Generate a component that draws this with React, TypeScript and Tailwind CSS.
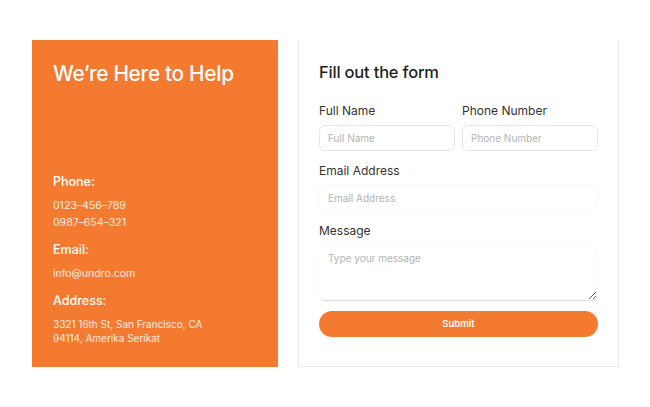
import React from 'react';

const font = { fontFamily: 'Inter, "Noto Sans", sans-serif' };

const ContactInfo = () => (
  <div className="w-[246px] h-[327px] bg-[#F47A30] text-white px-[21px] pt-[21px]">
    <h1 className="text-[20.8px] font-medium leading-[26px] tracking-[-0.3px]">We’re Here to Help</h1>
    <div className="mt-[87px]">
      <h3 className="text-[12.5px] font-medium leading-4">Phone:</h3>
      <p className="mt-[7px] text-[10.5px] leading-[17px] text-white/85">0123–456–789</p>
      <p className="text-[10.5px] leading-[17px] text-white/85">0987–654–321</p>
      <h3 className="mt-[11px] text-[12.5px] font-medium leading-4">Email:</h3>
      <p className="mt-[7px] text-[10.5px] leading-[17px] text-white/85">info@undro.com</p>
      <h3 className="mt-[11px] text-[12.5px] font-medium leading-4">Address:</h3>
      <p className="mt-[8px] text-[10px] leading-[14px] text-white/85">
        3321 16th St, San Francisco, CA
        <br />
        94114, Amerika Serikat
      </p>
    </div>
  </div>
);

const Field = ({ label, placeholder, faint }: { label: string; placeholder: string; faint?: boolean }) => (
  <div className="flex-1 min-w-0">
    <label className="block text-[12px] leading-4 text-[#333]">{label}</label>
    <input
      placeholder={placeholder}
      className={`mt-[6px] w-full h-[26px] rounded-md border px-2 text-[10px] outline-none placeholder:text-[#b3b3b3] ${
        faint ? 'border-[#f9f9f9]' : 'border-[#e6e6e6]'
      }`}
    />
  </div>
);

const ContactForm = () => (
  <div className="w-[321px] h-[327px] border-x border-b border-[#e8e8e8] px-[20px] pt-[22px]">
    <h2 className="text-[16.5px] font-medium leading-5 tracking-[-0.2px] text-[#1f1f1f]">Fill out the form</h2>
    <div className="mt-[21px] flex gap-[7px]">
      <Field label="Full Name" placeholder="Full Name" />
      <Field label="Phone Number" placeholder="Phone Number" />
    </div>
    <div className="mt-[12px]">
      <Field label="Email Address" placeholder="Email Address" faint />
    </div>
    <div className="mt-[12px]">
      <label className="block text-[12px] leading-4 text-[#333]">Message</label>
      <textarea
        placeholder="Type your message"
        className="mt-[6px] block w-full h-[56px] rounded-md border border-[#fafafa] border-b-[#dedede] px-2 py-[5px] text-[10px] outline-none placeholder:text-[#b3b3b3]"
      />
    </div>
    <button className="mt-[10px] w-full h-[26px] rounded-full bg-[#F47A30] text-white text-[9.5px] font-semibold">
      Submit
    </button>
  </div>
);

export default function App() {
  return (
    <div className="w-[650px] h-[407px] bg-white" style={font}>
      <div className="flex pt-[40px] pl-[32px] gap-[20px]">
        <ContactInfo />
        <ContactForm />
      </div>
    </div>
  );
}
